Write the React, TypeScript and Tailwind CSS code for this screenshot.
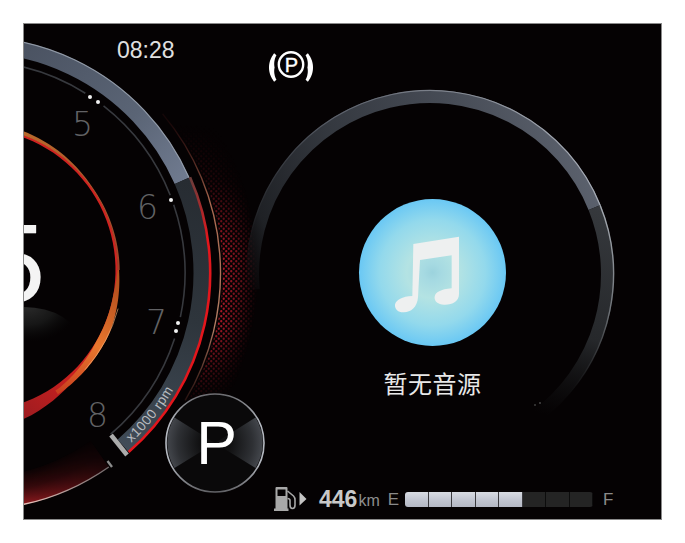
const deg = Math.PI / 180;

const pt = (cx: number, cy: number, r: number, a: number) =>
  `${(cx + r * Math.cos(a * deg)).toFixed(2)} ${(cy + r * Math.sin(a * deg)).toFixed(2)}`;

const arc = (cx: number, cy: number, r: number, a0: number, a1: number) => {
  const large = Math.abs(a1 - a0) > 180 ? 1 : 0;
  const sweep = a1 > a0 ? 1 : 0;
  return `M${pt(cx, cy, r, a0)} A${r} ${r} 0 ${large} ${sweep} ${pt(cx, cy, r, a1)}`;
};

// band whose inner and outer radius change along the angle
const band = (
  cx: number,
  cy: number,
  inner: (a: number) => number,
  outer: (a: number) => number,
  a0: number,
  a1: number,
) => {
  const steps = 48;
  const angles = Array.from({ length: steps + 1 }, (_, i) => a0 + ((a1 - a0) * i) / steps);
  const a = angles.map((x) => pt(cx, cy, outer(x), x));
  const b = angles.reverse().map((x) => pt(cx, cy, inner(x), x));
  return `M${a.join(" L")} L${b.join(" L")} Z`;
};

const GX = -27;
const GY = 273;
const RX = 430;
const RY = 274;
const IX = -26;
const IY = 270;

const lerp = (a: number, b: number, t: number) => a + (b - a) * Math.max(0, Math.min(1, t));

function Dials() {
  return (
    <svg className="absolute inset-0" width={637} height={495} viewBox="24 24 637 495" fill="none">
      <defs>
        <linearGradient id="bandTop" gradientUnits="userSpaceOnUse" x1="24" y1="50" x2="190" y2="180">
          <stop offset="0" stopColor="#4b5362" />
          <stop offset="0.6" stopColor="#5a6475" />
          <stop offset="1" stopColor="#717c91" />
        </linearGradient>
        <linearGradient id="bandLow" gradientUnits="userSpaceOnUse" x1="190" y1="180" x2="130" y2="450">
          <stop offset="0" stopColor="#272c32" />
          <stop offset="0.5" stopColor="#2e353c" />
          <stop offset="1" stopColor="#414c58" />
        </linearGradient>
        <linearGradient id="ringTop" gradientUnits="userSpaceOnUse" x1="250" y1="295" x2="595" y2="170">
          <stop offset="0" stopColor="#17181b" stopOpacity="0" />
          <stop offset="0.1" stopColor="#1f2125" />
          <stop offset="0.35" stopColor="#34383f" />
          <stop offset="0.7" stopColor="#474c56" />
          <stop offset="1" stopColor="#5c626e" />
        </linearGradient>
        <linearGradient id="ringEdge" gradientUnits="userSpaceOnUse" x1="250" y1="270" x2="595" y2="170">
          <stop offset="0" stopColor="#3a3d44" stopOpacity="0" />
          <stop offset="0.35" stopColor="#5c616b" />
          <stop offset="1" stopColor="#a8adb6" />
        </linearGradient>
        <linearGradient id="ringLow" gradientUnits="userSpaceOnUse" x1="600" y1="205" x2="535" y2="412">
          <stop offset="0" stopColor="#36393d" />
          <stop offset="0.6" stopColor="#26282b" />
          <stop offset="1" stopColor="#141516" stopOpacity="0" />
        </linearGradient>
        <linearGradient id="ringLowEdge" gradientUnits="userSpaceOnUse" x1="610" y1="205" x2="560" y2="390">
          <stop offset="0" stopColor="#a8adb4" />
          <stop offset="0.55" stopColor="#6c7075" />
          <stop offset="1" stopColor="#2a2b2d" stopOpacity="0" />
        </linearGradient>
        <linearGradient id="copper" gradientUnits="userSpaceOnUse" x1="170" y1="120" x2="190" y2="400">
          <stop offset="0" stopColor="#5c1a1a" stopOpacity="0.2" />
          <stop offset="0.3" stopColor="#a8674f" />
          <stop offset="0.75" stopColor="#b07d64" />
          <stop offset="1" stopColor="#7a3a30" stopOpacity="0.3" />
        </linearGradient>
        <linearGradient id="redFade" gradientUnits="userSpaceOnUse" x1="190" y1="180" x2="205" y2="240">
          <stop offset="0" stopColor="#6e3c3a" />
          <stop offset="1" stopColor="#e3161c" />
        </linearGradient>
        <linearGradient id="innerTop" gradientUnits="userSpaceOnUse" x1="24" y1="136" x2="117" y2="270">
          <stop offset="0" stopColor="#b86a2c" />
          <stop offset="1" stopColor="#a04028" />
        </linearGradient>
        <linearGradient id="innerOrange" gradientUnits="userSpaceOnUse" x1="114" y1="290" x2="60" y2="392">
          <stop offset="0" stopColor="#b8521f" />
          <stop offset="0.5" stopColor="#e8772e" />
          <stop offset="1" stopColor="#c9401f" />
        </linearGradient>
        <linearGradient id="innerRed" gradientUnits="userSpaceOnUse" x1="110" y1="300" x2="24" y2="415">
          <stop offset="0" stopColor="#cf2220" />
          <stop offset="0.6" stopColor="#c8201f" />
          <stop offset="1" stopColor="#a01c20" />
        </linearGradient>
        <radialGradient id="bottomGlow" gradientUnits="userSpaceOnUse" cx={GX} cy={GY} r="238">
          <stop offset="0.85" stopColor="#3c0808" stopOpacity="0" />
          <stop offset="0.93" stopColor="#3c0a0d" />
          <stop offset="1" stopColor="#921a1f" />
        </radialGradient>
        <linearGradient id="bottomFade" gradientUnits="userSpaceOnUse" x1="24" y1="500" x2="112" y2="460">
          <stop offset="0" stopColor="#fff" />
          <stop offset="1" stopColor="#fff" stopOpacity="0.1" />
        </linearGradient>
        <mask id="bottomMask" maskUnits="userSpaceOnUse" x="0" y="440" width="140" height="90">
          <rect x="0" y="440" width="140" height="90" fill="url(#bottomFade)" />
        </mask>
        <linearGradient id="bottomEdge" gradientUnits="userSpaceOnUse" x1="24" y1="505" x2="110" y2="464">
          <stop offset="0" stopColor="#e8c4bc" />
          <stop offset="1" stopColor="#6c6668" />
        </linearGradient>
        <radialGradient id="hazeFade" gradientUnits="userSpaceOnUse" cx={GX} cy={GY} r="300">
          <stop offset="0.83" stopColor="#000" />
          <stop offset="0.835" stopColor="#e8e8e8" />
          <stop offset="0.88" stopColor="#a0a0a0" />
          <stop offset="0.95" stopColor="#000" />
        </radialGradient>
        <linearGradient id="hazeY" gradientUnits="userSpaceOnUse" x1="0" y1="125" x2="0" y2="405">
          <stop offset="0" stopColor="#000" />
          <stop offset="0.2" stopColor="#333" />
          <stop offset="0.45" stopColor="#fff" />
          <stop offset="0.72" stopColor="#fff" />
          <stop offset="1" stopColor="#000" />
        </linearGradient>
        <mask id="hazeMaskR" maskUnits="userSpaceOnUse" x="150" y="100" width="130" height="320">
          <rect x="150" y="100" width="130" height="320" fill="url(#hazeFade)" />
        </mask>
        <mask id="hazeMaskY" maskUnits="userSpaceOnUse" x="150" y="100" width="130" height="320">
          <rect x="150" y="100" width="130" height="320" fill="url(#hazeY)" />
        </mask>
        <pattern id="dots" patternUnits="userSpaceOnUse" width="5" height="5">
          <circle cx="1.25" cy="1.25" r="1.15" fill="#bd1c2c" />
          <circle cx="3.75" cy="3.75" r="1.15" fill="#bd1c2c" />
        </pattern>
        <radialGradient id="smudge" gradientUnits="userSpaceOnUse" cx="0" cy="0" r="1" gradientTransform="translate(28 304) scale(50 38)">
          <stop offset="0" stopColor="#2c2c2c" />
          <stop offset="0.55" stopColor="#161616" />
          <stop offset="1" stopColor="#0a0a0a" stopOpacity="0" />
        </radialGradient>
      </defs>

      {/* red halftone */}
      <g mask="url(#hazeMaskR)">
        <rect x="150" y="100" width="130" height="320" fill="url(#dots)" mask="url(#hazeMaskY)" />
      </g>
      <path d={arc(GX, GY, 247.5, -40, 31)} stroke="url(#copper)" strokeWidth="1.4" />

      {/* rpm band */}
      <path d={arc(GX, GY, 228.5, -105, -23.8)} stroke="url(#bandTop)" strokeWidth="16" />
      <path d={arc(GX, GY, 236.2, -105, -23.8)} stroke="#a3abb8" strokeWidth="1.2" opacity="0.8" />
      <path d={arc(GX, GY, 228.5, -23.8, 49)} stroke="url(#bandLow)" strokeWidth="16" />
      <path d={arc(GX, GY, 237.2, -23.8, 49)} stroke="url(#redFade)" strokeWidth="2.6" />
      <path d="M111 435 L127 455" stroke="#ababab" strokeWidth="4.5" />
      {[
        [-110, -58],
        [-52, -21.5],
        [-18.8, 12],
        [18, 49.5],
      ].map(([a, b]) => (
        <path key={a} d={arc(GX, GY, 212, a, b)} stroke="#37393e" strokeWidth="1.6" />
      ))}
      {[
        [90, 97],
        [98, 102],
        [171, 200],
        [178, 323],
        [176, 331],
      ].map(([x, y]) => (
        <circle key={x} cx={x} cy={y} r="2" fill="#f2f2f2" />
      ))}
      <text fontFamily="'Liberation Sans', sans-serif" fontSize="13.5" letterSpacing="0.5" fill="#b9bcc0">
        <textPath href="#rpmPath">x1000 rpm</textPath>
      </text>
      <path id="rpmPath" d={arc(GX, GY, 232, 47, 15)} />

      {/* inner speed arc */}
      <path
        d={band(IX, IY, () => 141.5, (a) => (a < 35 ? 144 : lerp(144, 157, (a - 35) / 36)), -75, 78)}
        fill="url(#innerRed)"
      />
      <path
        d={band(IX, IY, () => 143.5, (a) => lerp(147.5, 144.5, (a + 72) / 35) + lerp(0, 1.2, (a + 30) / 30), -75, 0)}
        fill="url(#innerTop)"
      />
      <path
        d={band(
          IX,
          IY,
          (a) => lerp(143.5, 141.5, a / 10) + lerp(0, 4, (a - 30) / 24),
          (a) => lerp(145, 149.5, a / 25) + lerp(0, 0.5, (a - 30) / 24),
          0,
          56,
        )}
        fill="url(#innerOrange)"
      />
      <path d={arc(IX, IY, 149.2, 15, 42)} stroke="#f0b078" strokeWidth="0.9" opacity="0.7" />

      {/* bottom sweep */}
      <path d={arc(GX, GY, 221, 55, 85)} stroke="url(#bottomGlow)" strokeWidth="32" mask="url(#bottomMask)" />
      <path d={arc(GX, GY, 236.8, 55, 85)} stroke="url(#bottomEdge)" strokeWidth="1.4" />
      <path d="M107.5 461 L112 467" stroke="#8b8b8b" strokeWidth="2.4" />
      <ellipse cx="24" cy="340" rx="54" ry="33" fill="url(#smudge)" />

      {/* media ring */}
      <path d={arc(RX, RY, 177.5, 175, 338)} stroke="url(#ringTop)" strokeWidth="13" />
      <path d={arc(RX, RY, 183.5, 178, 338)} stroke="url(#ringEdge)" strokeWidth="1.2" />
      <path d={arc(RX, RY, 177.5, -22, 54)} stroke="url(#ringLow)" strokeWidth="13" />
      <path d={arc(RX, RY, 183.5, -22, 45)} stroke="url(#ringLowEdge)" strokeWidth="1.4" />
      <circle cx="535" cy="405" r="0.8" fill="#666" />
      <circle cx="540" cy="403" r="0.8" fill="#777" />
    </svg>
  );
}

function ParkIcon() {
  const taper = (a: number, mid: number) => 1 - Math.abs(a - mid) / 40;
  return (
    <svg width={48} height={34} viewBox="0 0 48 34" fill="none">
      <circle cx="24" cy="14.5" r="12.2" stroke="#fff" strokeWidth="2.4" />
      <text x="24.5" y="21.5" textAnchor="middle" fontFamily="'Liberation Sans', sans-serif" fontSize="20" fill="#fff" stroke="#fff" strokeWidth="0.4">
        P
      </text>
      <path d={band(24, 17.5, (a) => 22 - 3 - 2.6 * taper(a, 180), () => 22, 140, 220)} fill="#fff" />
      <path d={band(24, 17.5, (a) => 22 - 3 - 2.6 * taper(a, 0), () => 22, -40, 40)} fill="#fff" />
    </svg>
  );
}

function MusicNote() {
  return (
    <svg width={80} height={80} viewBox="157 157 240 240">
      <path
        fill="#eef0f0"
        d="M218 190 L355 168 L355 340 C355 362 335 373 310 372 C290 371 280 360 282 348 C284 335 300 326 333 323 L333 224 L238 238 L232 350 C230 380 210 395 190 395 C172 396 162 385 163 372 C165 358 185 347 215 346 Z"
      />
    </svg>
  );
}

function FuelIcon() {
  return (
    <svg width={34} height={26} viewBox="0 0 34 26" fill="none">
      <path d="M0 25 H14.5 V22.5 H13.5 V2 Q13.5 1 12.5 1 H2.5 Q1.5 1 1.5 2 V22.5 H0 Z M3.5 3.5 H11.5 V10 H3.5 Z" fill="#a8a8a8" fillRule="evenodd" />
      <path d="M13.5 5 L19.5 10 Q21 11.5 21 14 V19 Q21 22.5 18.5 22.5 Q16 22.5 16 19 V14.5 Q16 12.5 13.5 12.5" stroke="#a8a8a8" strokeWidth="1.6" />
      <path d="M25.5 6 L32.5 13 L25.5 19.5 Z" fill="#c4c4c4" />
    </svg>
  );
}

function KnobFace() {
  return (
    <svg className="absolute inset-0" width={100} height={100} viewBox="0 0 100 100" fill="none">
      <defs>
        <radialGradient id="wedge" gradientUnits="userSpaceOnUse" cx="50" cy="50" r="50">
          <stop offset="0.3" stopColor="#101011" />
          <stop offset="0.75" stopColor="#2e3034" />
          <stop offset="1" stopColor="#484b51" />
        </radialGradient>
        <linearGradient id="ring" gradientUnits="userSpaceOnUse" x1="0" y1="0" x2="0" y2="100">
          <stop offset="0" stopColor="#6a6a6e" />
          <stop offset="0.3" stopColor="#b4b8c0" />
          <stop offset="0.7" stopColor="#b4b8c0" />
          <stop offset="1" stopColor="#606064" />
        </linearGradient>
      </defs>
      <circle cx="50" cy="50" r="49" fill="#0a090a" />
      <path d="M50 50 L9.5 24.5 A48 48 0 0 0 9.5 75 Z" fill="url(#wedge)" />
      <path d="M50 50 L90.5 24.5 A48 48 0 0 1 90.5 75 Z" fill="url(#wedge)" />
      <circle cx="50" cy="50" r="49" stroke="url(#ring)" strokeWidth="1.6" />
    </svg>
  );
}

export default function App() {
  return (
    <div className="w-[685px] h-[543px] bg-white pt-[23px] pl-[23px]">
      <div className="box-content w-[637px] h-[495px] border border-[#8a8a8a] bg-[#050203] relative overflow-hidden flex flex-col text-white font-['Liberation_Sans',sans-serif]">
        <Dials />

        {/* big speed digit, cut by the screen edge */}
        <span className="absolute left-[-41px] top-[184px] text-[112px] leading-[112px] text-[#f4f4f4]">
          5
        </span>

        {/* tach numerals */}
        <span className="absolute left-[48px] top-[84px] text-[33px] leading-[33px] font-extralight text-[#626265] font-['DejaVu_Sans',sans-serif]">5</span>
        <span className="absolute left-[113px] top-[167px] text-[33px] leading-[33px] font-extralight text-[#626265] font-['DejaVu_Sans',sans-serif]">6</span>
        <span className="absolute left-[122px] top-[282px] text-[33px] leading-[33px] font-extralight text-[#626265] font-['DejaVu_Sans',sans-serif]">7</span>
        <span className="absolute left-[63px] top-[375px] text-[33px] leading-[33px] font-extralight text-[#626265] font-['DejaVu_Sans',sans-serif]">8</span>

        {/* gear knob */}
        <div className="absolute left-[141px] top-[369px] w-[100px] h-[100px] flex items-center justify-center">
          <KnobFace />
          <span className="relative ml-[3px] text-[61px] leading-none text-white">P</span>
        </div>

        <header className="relative flex items-start h-[60px] pl-[93px]">
          <span className="mt-[13px] text-[23px] leading-[26px] text-[#e0e0e0]">08:28</span>
          <div className="ml-[92px] mt-[26px]">
            <ParkIcon />
          </div>
        </header>

        <main className="relative flex-1 pt-[115px] pl-[335px]">
          <div className="w-[147px] flex flex-col items-center">
            <div className="w-[147px] h-[147px] rounded-full flex items-center justify-center bg-[radial-gradient(circle_closest-side,#9cd3dd_0%,#a6dae2_12%,#b4e3e3_35%,#93d9ec_72%,#6ac8f4_100%)]">
              <MusicNote />
            </div>
            <p className="mt-[22px] text-[24px] leading-[30px] tracking-[0.5px] text-[#e8e8e8] font-['Noto_Sans_CJK_SC',sans-serif]">
              暂无音源
            </p>
          </div>
        </main>

        <footer className="relative flex items-center h-[34px] pl-[250px] pb-[6px]">
          <FuelIcon />
          <span className="ml-[11px] text-[23px] leading-none font-bold text-[#c8c8c8]">446</span>
          <span className="ml-[1px] mt-[4px] text-[16px] leading-none text-[#8e8e8e]">km</span>
          <span className="ml-[8px] text-[17px] leading-none text-[#8a8a8a]">E</span>
          <div className="ml-[6px] flex w-[188px] h-[15px] rounded-[3px] overflow-hidden">
            {[0, 1, 2, 3, 4].map((i) => (
              <div key={i} className="flex-1 border-r border-[#3a3a3e] bg-gradient-to-b from-[#d8dbe2] via-[#c2c6d1] to-[#b4b8c4]" />
            ))}
            {[5, 6, 7].map((i) => (
              <div key={i} className="flex-1 border-r border-[#0c0c0c] bg-[#242424]" />
            ))}
          </div>
          <span className="ml-[10px] text-[17px] leading-none text-[#8a8a8a]">F</span>
        </footer>
      </div>
    </div>
  );
}
